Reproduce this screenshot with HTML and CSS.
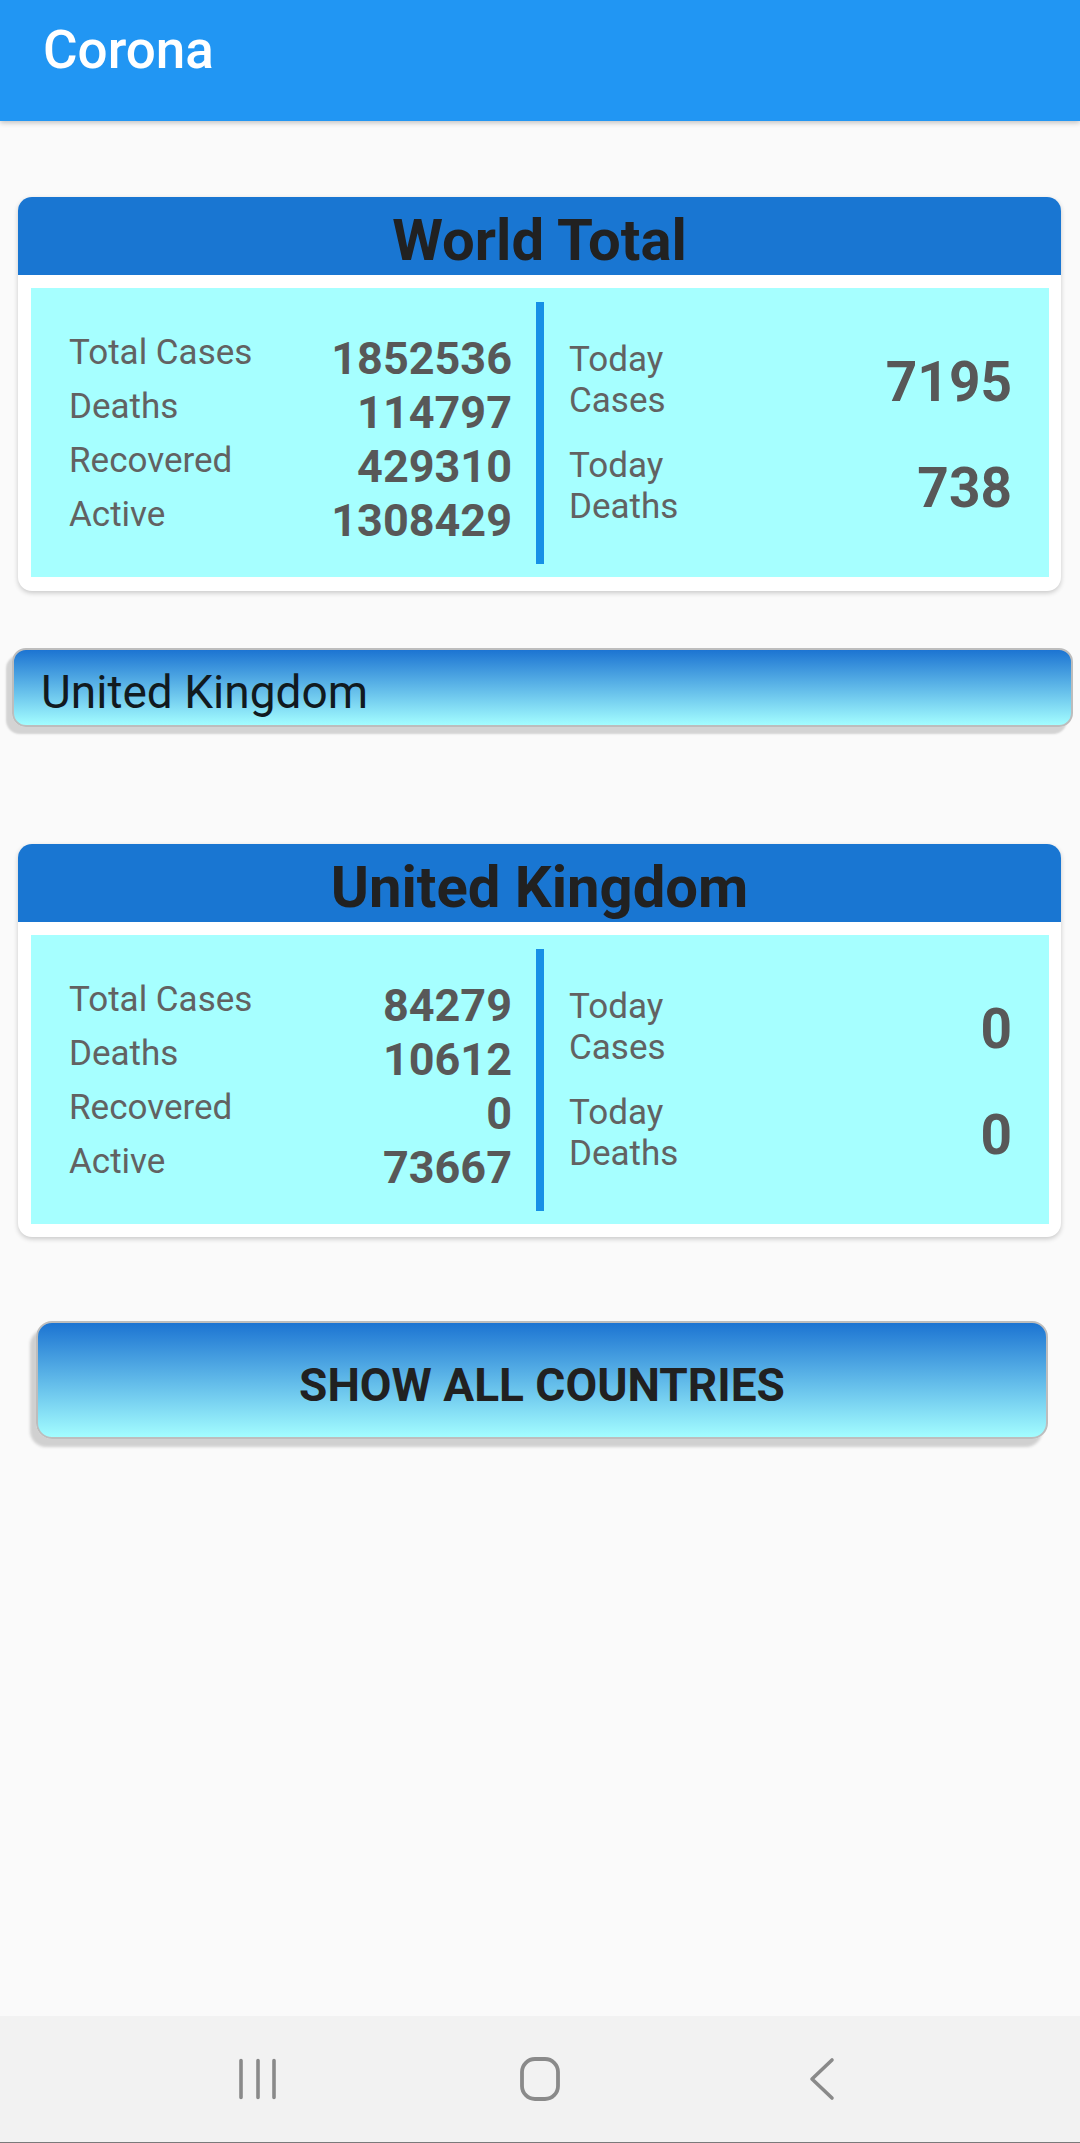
FILE: index.html
```
<!DOCTYPE html>
<html lang="en">
<head>
<meta charset="utf-8">
<title>Corona</title>
<link rel="stylesheet" href="styles.css">
</head>
<body>
<div class="screen">
  <header class="appbar"><span class="appbar-title">Corona</span></header>
  <main class="content">
    <section class="card card-world">
      <h2 class="card-title">World Total</h2>
      <div class="stats">
        <div class="totals">
          <div class="row"><span class="label">Total Cases</span><span class="num">1852536</span></div>
          <div class="row"><span class="label">Deaths</span><span class="num">114797</span></div>
          <div class="row"><span class="label">Recovered</span><span class="num">429310</span></div>
          <div class="row"><span class="label">Active</span><span class="num">1308429</span></div>
        </div>
        <div class="divider"></div>
        <div class="today">
          <div class="trow"><span class="tlabel">Today<br>Cases</span><span class="tnum">7195</span></div>
          <div class="trow"><span class="tlabel">Today<br>Deaths</span><span class="tnum">738</span></div>
        </div>
      </div>
    </section>

    <div class="select">United Kingdom</div>

    <section class="card card-country">
      <h2 class="card-title">United Kingdom</h2>
      <div class="stats">
        <div class="totals">
          <div class="row"><span class="label">Total Cases</span><span class="num">84279</span></div>
          <div class="row"><span class="label">Deaths</span><span class="num">10612</span></div>
          <div class="row"><span class="label">Recovered</span><span class="num">0</span></div>
          <div class="row"><span class="label">Active</span><span class="num">73667</span></div>
        </div>
        <div class="divider"></div>
        <div class="today">
          <div class="trow"><span class="tlabel">Today<br>Cases</span><span class="tnum">0</span></div>
          <div class="trow"><span class="tlabel">Today<br>Deaths</span><span class="tnum">0</span></div>
        </div>
      </div>
    </section>

    <button class="show-all" type="button">SHOW ALL COUNTRIES</button>
  </main>
  <nav class="navbar">
    <div class="nav-slot">
      <svg class="nav-icon" width="44" height="44" viewBox="0 0 44 44"><path d="M5 3.5V40.5M22 3.5V40.5M38 3.5V40.5" fill="none" stroke="#8a8a8a" stroke-width="3.6" stroke-linecap="round"/></svg>
    </div>
    <div class="nav-slot">
      <svg class="nav-icon" width="44" height="46" viewBox="0 0 44 46"><rect x="4" y="3" width="36" height="40" rx="13" ry="13" fill="none" stroke="#8a8a8a" stroke-width="3.8"/></svg>
    </div>
    <div class="nav-slot">
      <svg class="nav-icon" width="44" height="44" viewBox="0 0 44 44"><path d="M32 3L12 22L32 41" fill="none" stroke="#8a8a8a" stroke-width="3.6" stroke-linecap="round" stroke-linejoin="round"/></svg>
    </div>
  </nav>
</div>
</body>
</html>
```
FILE: styles.css
```
* {
  box-sizing: border-box;
}

html, body {
  margin: 0;
  padding: 0;
  background: #fafafa;
  font-family: Roboto, "Liberation Sans", Arial, sans-serif;
}

.screen {
  display: flex;
  flex-direction: column;
  width: 1080px;
  height: 2143px;
  overflow: hidden;
}

.appbar {
  height: 121px;
  flex: none;
  background: #2196f3;
  padding: 24px 0 0 43px;
  box-shadow: 0 2px 5px rgba(0, 0, 0, 0.22);
  position: relative;
  z-index: 1;
}

.appbar-title {
  display: block;
  color: #ffffff;
  font-size: 53px;
  line-height: 53px;
  font-weight: 500;
}

.content {
  flex: 1;
  display: flex;
  flex-direction: column;
  padding-top: 76px;
}

.card {
  margin: 0 19px 0 18px;
  height: 394px;
  background: #ffffff;
  border-radius: 14px;
  box-shadow: 0 2px 5px rgba(0, 0, 0, 0.2);
  overflow: hidden;
}

.card-country {
  height: 393px;
}

.card-title {
  margin: 0;
  height: 78px;
  padding-top: 14px;
  background: #1976d2;
  color: #212121;
  font-size: 58px;
  line-height: 58px;
  font-weight: 700;
  text-align: center;
}

.stats {
  display: flex;
  align-items: flex-start;
  height: 289px;
  margin: 13px 12px 0 13px;
  background: #a6ffff;
}

.totals {
  width: 505px;
  padding: 47px 24px 0 38px;
}

.row {
  display: flex;
  justify-content: space-between;
  align-items: flex-start;
  height: 54px;
}

.label {
  font-size: 35px;
  line-height: 35px;
  color: #626262;
}

.num {
  margin-top: 2px;
  font-size: 45px;
  line-height: 44px;
  font-weight: 700;
  color: #585858;
}

.divider {
  width: 8px;
  height: 262px;
  margin-top: 14px;
  background: #1690e6;
  flex: none;
}

.today {
  flex: 1;
  padding: 51px 37px 0 25px;
  display: flex;
  flex-direction: column;
  gap: 24px;
}

.trow {
  display: flex;
  justify-content: space-between;
  align-items: center;
}

.tlabel {
  font-size: 35px;
  line-height: 41px;
  color: #626262;
}

.tnum {
  font-size: 55px;
  line-height: 53px;
  font-weight: 700;
  color: #585858;
  margin-top: 4px;
}

.select {
  margin: 57px 7px 0 12px;
  height: 79px;
  padding: 19px 0 0 27px;
  border: 2px solid #bdbdbd;
  border-radius: 14px;
  background: linear-gradient(to bottom, #1c74d2, #a3fdff);
  box-shadow: -6px 7px 2px #d3d3d3;
  color: #111a1f;
  font-size: 46px;
  line-height: 46px;
}

.card-country {
  margin-top: 117px;
}

.show-all {
  margin: 84px 32px 0 36px;
  height: 118px;
  padding: 10px 0 0;
  border: 2px solid #bdbdbd;
  border-radius: 16px;
  background: linear-gradient(to bottom, #1c74d2, #a3fdff);
  box-shadow: -6px 8px 3px #d0d0d0;
  color: #212121;
  font-family: Roboto, "Liberation Sans", Arial, sans-serif;
  font-size: 46px;
  font-weight: 700;
  text-align: center;
}

.navbar {
  flex: none;
  height: 127px;
  background: #f2f2f2;
  border-bottom: 1px solid #7a7a7a;
  display: flex;
  justify-content: center;
  align-items: center;
}

.nav-slot {
  width: 282px;
  display: flex;
  justify-content: center;
  align-items: center;
}

.nav-icon {
  display: block;
}
```
